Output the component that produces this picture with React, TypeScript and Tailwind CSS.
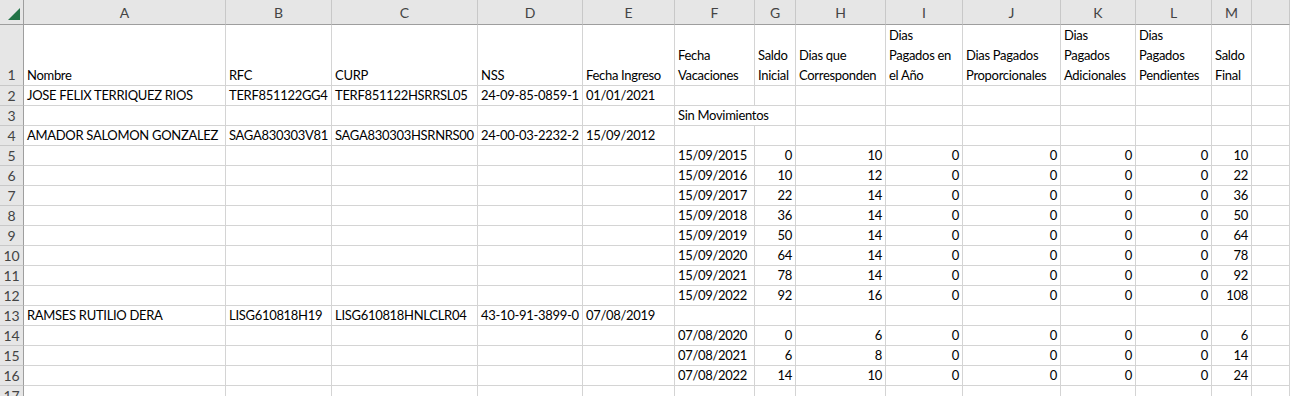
const COLS = ['A', 'B', 'C', 'D', 'E', 'F', 'G', 'H', 'I', 'J', 'K', 'L', 'M', '']

type Cell = { t: string; r?: boolean; span?: number }

const header: string[][] = [
  ['Nombre'],
  ['RFC'],
  ['CURP'],
  ['NSS'],
  ['Fecha Ingreso'],
  ['Fecha', 'Vacaciones'],
  ['Saldo', 'Inicial'],
  ['Dias que', 'Corresponden'],
  ['Dias', 'Pagados en', 'el Año'],
  ['Dias Pagados', 'Proporcionales'],
  ['Dias', 'Pagados', 'Adicionales'],
  ['Dias', 'Pagados', 'Pendientes'],
  ['Saldo', 'Final'],
  [],
]

const person = (n: string, rfc: string, curp: string, nss: string, f: string): Cell[] => [
  { t: n }, { t: rfc }, { t: curp }, { t: nss }, { t: f },
  { t: '' }, { t: '' }, { t: '' }, { t: '' }, { t: '' }, { t: '' }, { t: '' }, { t: '' }, { t: '' },
]

const mov = (d: string, nums: number[]): Cell[] => [
  { t: '' }, { t: '' }, { t: '' }, { t: '' }, { t: '' },
  { t: d },
  ...nums.map((n) => ({ t: String(n), r: true })),
  { t: '' },
]

const empty = (): Cell[] => COLS.map(() => ({ t: '' }))

const rows: Cell[][] = [
  person('JOSE FELIX TERRIQUEZ RIOS', 'TERF851122GG4', 'TERF851122HSRRSL05', '24-09-85-0859-1', '01/01/2021'),
  [
    { t: '' }, { t: '' }, { t: '' }, { t: '' }, { t: '' },
    { t: 'Sin Movimientos', span: 2 },
    { t: '' }, { t: '' }, { t: '' }, { t: '' }, { t: '' }, { t: '' }, { t: '' },
  ],
  person('AMADOR SALOMON GONZALEZ', 'SAGA830303V81', 'SAGA830303HSRNRS00', '24-00-03-2232-2', '15/09/2012'),
  mov('15/09/2015', [0, 10, 0, 0, 0, 0, 10]),
  mov('15/09/2016', [10, 12, 0, 0, 0, 0, 22]),
  mov('15/09/2017', [22, 14, 0, 0, 0, 0, 36]),
  mov('15/09/2018', [36, 14, 0, 0, 0, 0, 50]),
  mov('15/09/2019', [50, 14, 0, 0, 0, 0, 64]),
  mov('15/09/2020', [64, 14, 0, 0, 0, 0, 78]),
  mov('15/09/2021', [78, 14, 0, 0, 0, 0, 92]),
  mov('15/09/2022', [92, 16, 0, 0, 0, 0, 108]),
  person('RAMSES RUTILIO DERA', 'LISG610818H19', 'LISG610818HNLCLR04', '43-10-91-3899-0', '07/08/2019'),
  mov('07/08/2020', [0, 6, 0, 0, 0, 0, 6]),
  mov('07/08/2021', [6, 8, 0, 0, 0, 0, 14]),
  mov('07/08/2022', [14, 10, 0, 0, 0, 0, 24]),
  empty(),
]

export default function App() {
  return (
    <div className="h-[396px] w-[1290px] overflow-hidden bg-white font-['Lato',sans-serif] text-[13px] tracking-[-0.3px] text-black">
      <div className="grid grid-cols-[24px_202px_106px_146px_105px_92px_80px_41px_90px_77px_98px_75px_76px_40px_1fr] grid-rows-[25px_61px_repeat(16,20px)]">
        {/* Select-all corner */}
        <div className="flex items-end justify-end border-r border-b border-[#9e9e9e] bg-[#e6e6e6] pr-[3px] pb-[4px]">
          <svg width="12" height="12" viewBox="0 0 12 12">
            <polygon points="12,0 12,12 0,12" fill="#217346" />
          </svg>
        </div>

        {/* Column headers */}
        {COLS.map((c, i) => (
          <div
            key={c + i}
            className="flex items-center justify-center border-r border-b border-r-[#c8c8c8] border-b-[#9e9e9e] bg-[#e6e6e6] text-[14px] tracking-normal text-[#444]"
          >
            {c}
          </div>
        ))}

        {/* Row 1 */}
        <div className="flex items-end justify-center border-r border-b border-r-[#9e9e9e] border-b-[#c8c8c8] bg-[#e6e6e6] text-[14px] leading-[20px] tracking-normal text-[#444]">
          1
        </div>
        {header.map((lines, i) => (
          <div key={i} className="flex flex-col justify-end overflow-hidden border-r border-b border-[#d4d4d4] px-[3px] leading-[20px]">
            {lines.map((l) => (
              <span key={l} className="whitespace-nowrap">
                {l}
              </span>
            ))}
          </div>
        ))}

        {/* Data rows */}
        {rows.map((row, ri) => (
          <Row key={ri} n={ri + 2} cells={row} />
        ))}
      </div>
    </div>
  )
}

function Row({ n, cells }: { n: number; cells: Cell[] }) {
  return (
    <>
      <div className="flex items-end justify-center border-r border-b border-r-[#9e9e9e] border-b-[#c8c8c8] bg-[#e6e6e6] text-[14px] leading-[19px] tracking-normal text-[#444]">
        {n}
      </div>
      {cells.map((c, i) => (
        <div
          key={i}
          className={
            'flex items-end overflow-hidden whitespace-nowrap border-r border-b border-[#d4d4d4] px-[3px] leading-[19px] ' +
            (c.r ? 'justify-end ' : '') +
            (c.span === 2 ? 'col-span-2' : '')
          }
        >
          {c.t}
        </div>
      ))}
    </>
  )
}
